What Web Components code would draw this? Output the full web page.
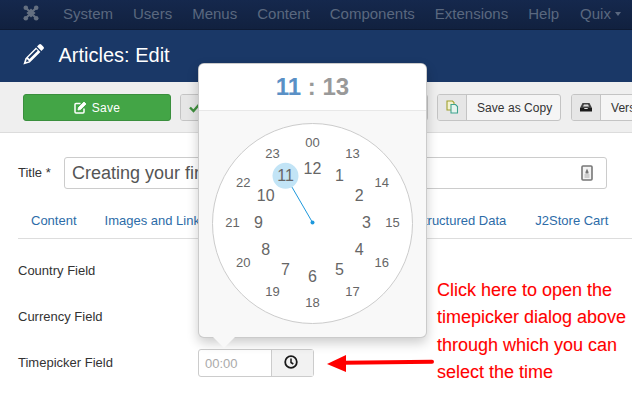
<!DOCTYPE html>
<html>
<head>
<meta charset="utf-8">
<title>Articles: Edit</title>
<style>
  html, body { margin: 0; padding: 0; }
  body {
    width: 632px; height: 402px; overflow: hidden; position: relative;
    background: #fff; color: #333;
    font-family: "Liberation Sans", Arial, sans-serif; font-size: 13px;
  }
</style>
</head>
<body>
<jm-navbar>
  <span>System</span><span>Users</span><span>Menus</span><span>Content</span><span>Components</span><span>Extensions</span><span>Help</span><span class="last">Quix</span>
</jm-navbar>
<jm-title>Articles: Edit</jm-title>
<jm-toolbar>
  <jm-save>Save</jm-save>
  <jm-tool width="248" icon="check"></jm-tool>
  <jm-tool width="124" icon="copy">Save as Copy</jm-tool>
  <jm-tool width="100" icon="inbox" class="versions">Versions</jm-tool>
</jm-toolbar>
<jm-titlefield></jm-titlefield>
<jm-tabs>
  <a>Content</a><a>Images and Links</a><a>Publishing</a><a class="wide">Options</a><a>Structured Data</a><a>J2Store Cart</a>
</jm-tabs>
<jm-field label="Country Field"></jm-field>
<jm-field label="Currency Field"></jm-field>
<jm-field label="Timepicker Field"><jm-timeinput></jm-timeinput></jm-field>
<clock-popover hour="11" minute="13"></clock-popover>
<jm-callout>Click here to open the<br>timepicker dialog above<br>through which you can<br>select the time</jm-callout>

<script>
// small helper so every element gets an open shadow root with its markup
class Base extends HTMLElement {
  render(html) {
    if (!this.shadowRoot) this.attachShadow({ mode: 'open' });
    this.shadowRoot.innerHTML = html;
  }
}

class JmNavbar extends Base {
  connectedCallback() {
    this.render(`
      <style>
        :host {
          display: flex; align-items: center; height: 29px; box-sizing: content-box;
          background: linear-gradient(#15284d, #11213f);
          border-bottom: 1px solid #0d1a33;
          overflow: hidden;
        }
        svg { width: 16px; height: 16px; margin: -3px 0 0 23px; flex: none; }
        nav { display: flex; margin: -2px 0 0 24px; font-size: 15px; color: #5a687f; white-space: nowrap; }
        ::slotted(span) { margin-right: 20px; }
        ::slotted(.last) { margin-left: 1px; }
        i { width: 0; height: 0; border: 3px solid transparent; border-top: 4px solid #5a687f; margin: 2px 0 0 -16px; flex: none; }
      </style>
      <svg viewBox="0 0 16 16" fill="none" stroke="#646f80" stroke-width="2.200">
        <path d="M3.500 3.500 12.500 12.500M12.500 3.500 3.500 12.500M5 8l3-3 3 3-3 3z"/>
        <g fill="#646f80" stroke="none"><circle cx="2.800" cy="2.800" r="2.300"/><circle cx="13.200" cy="2.800" r="2.300"/><circle cx="2.800" cy="13.200" r="2.300"/><circle cx="13.200" cy="13.200" r="2.300"/></g>
      </svg>
      <nav><slot></slot></nav><i></i>`);
  }
}

class JmTitle extends Base {
  connectedCallback() {
    this.render(`
      <style>
        :host {
          display: flex; align-items: center; height: 52px; padding-left: 23px;
          background: #1a3867; color: #fff; font-size: 20px;
        }
        svg { width: 21px; height: 21px; margin: -3px 14.500px 0 0; }
        span { margin-top: -2px; }
      </style>
      <svg viewBox="0 0 21 21" fill="#fff">
        <path d="M16 .6a1.6 1.6 0 0 1 2.2 0l2.2 2.2a1.6 1.6 0 0 1 0 2.2l-2 2-4.4-4.4z"/>
        <path d="M13 3.6 17.400 8 6.800 18.600.4 20.600 2.400 14.200z M3.800 14.900 3 17.900l.1.100 3-.8z M5 13.600l1.400 1.400 8.300-8.300-1.400-1.400z" fill-rule="evenodd"/>
      </svg>
      <span><slot></slot></span>`);
  }
}

class JmToolbar extends Base {
  connectedCallback() {
    this.render(`
      <style>
        :host {
          display: flex; gap: 9px; height: 27px; padding: 12px 0 11px 23px;
          background: #efefef; border-bottom: 1px solid #dcdcdc; overflow: hidden;
        }
        ::slotted(.versions) { margin-left: 1px; }
      </style>
      <slot></slot>`);
  }
}

class JmSave extends Base {
  connectedCallback() {
    this.render(`
      <style>
        :host {
          display: flex; align-items: center; justify-content: center; gap: 5px;
          box-sizing: border-box; width: 148px; height: 27px; flex: none;
          background: #43a546; border: 1px solid #3a8f3d; border-radius: 3px;
          color: #fff; font-size: 12px; letter-spacing: .3px;
        }
        svg { width: 13px; height: 13px; }
      </style>
      <svg viewBox="0 0 13 13" fill="none" stroke="#fff" stroke-width="1.500">
        <path d="M10 7.500V11a1 1 0 0 1-1 1H2a1 1 0 0 1-1-1V3.500a1 1 0 0 1 1-1h4.500"/>
        <path d="M4.500 6.500 4 9l2.500-.5L12 3 10 1z" fill="#fff" stroke-width=".8"/>
      </svg>
      <slot></slot>`);
  }
}

const toolIcons = {
  check: '<path d="M2 7.500 5.500 11 12 3.500" fill="none" stroke="#3f8f3e" stroke-width="2.400"/>',
  copy: '<path d="M2 1h5.500l1.500 1.500V10H2z" fill="#f4f2cf" stroke="#9fa02f" stroke-width="1.100"/><path d="M6 4.500h4.500l2 2V13H6z" fill="#e6f4ee" stroke="#3fa38f" stroke-width="1.100"/>',
  inbox: '<path d="M3.500 3h7l2.500 5H1z" fill="#444"/><path d="M5 4.500h4l1 2H4z" fill="#ddd"/><path d="M1 8h4l.6 1h2.800l.6-1h4v3.500H1z" fill="#1c1c1c"/>'
};

class JmTool extends Base {
  connectedCallback() {
    const w = this.getAttribute('width');
    this.render(`
      <style>
        :host {
          display: flex; box-sizing: border-box; width: ${w}px; height: 27px; flex: none;
          background: #f5f5f5; border: 1px solid #c4c4c4; border-radius: 3px;
          color: #333; font-size: 12px; letter-spacing: .05px; white-space: nowrap; overflow: hidden;
        }
        b { display: flex; align-items: center; justify-content: center; flex: none; width: 28px; height: 100%; background: #e6e6e6; border-right: 1px solid #c4c4c4; }
        span { align-self: center; padding-left: 10px; }
        svg { width: 14px; height: 14px; margin-top: -1px; }
      </style>
      <b><svg viewBox="0 0 14 14">${toolIcons[this.getAttribute('icon')]}</svg></b>
      <span><slot></slot></span>`);
  }
}

class JmTitlefield extends Base {
  connectedCallback() {
    this.render(`
      <style>
        :host { display: flex; align-items: center; height: 32px; padding: 24px 25px 0 18px; }
        label { width: 46px; flex: none; font-size: 13px; color: #333; margin-top: -2px; }
        div {
          flex: 1; display: flex; align-items: center; justify-content: space-between;
          box-sizing: border-box; height: 32px; padding: 0 13px 0 7px;
          border: 1px solid #ccc; border-radius: 3px;
          color: #555; font-size: 18px; white-space: nowrap;
        }
        svg { width: 12px; height: 16px; }
      </style>
      <label>Title *</label>
      <div>Creating your first article
        <svg viewBox="0 0 12 16"><rect x="1" y="1" width="10" height="14" rx="1" fill="#f3f3f3" stroke="#777" stroke-width="1.600"/><path d="M6 3.500l1.500 3.500v1.500h-3V7z" fill="#777"/><path d="M3.500 10h5M3.500 12h5" stroke="#aaa"/></svg>
      </div>`);
  }
}

class JmTabs extends Base {
  connectedCallback() {
    this.render(`
      <style>
        :host {
          display: flex; height: 37px; margin: 12px 0 0 18px; padding-left: 0;
          border-bottom: 1px solid #ddd; white-space: nowrap; overflow: hidden;
        }
        ::slotted(a) { padding: 12px 14px 0 13px; margin-right: 1px; color: #2d6ca8; font-size: 13px; }
        ::slotted(.wide) { padding-right: 34px; }
        ::slotted(a:last-child) { padding-left: 14px; }
      </style>
      <slot></slot>`);
  }
}

class JmField extends Base {
  connectedCallback() {
    this.render(`
      <style>
        :host { display: flex; align-items: center; height: 46px; padding-left: 18px; }
        :host(:first-of-type) { margin-top: 8px; }
        label { width: 180px; flex: none; font-size: 13px; color: #333; }
      </style>
      <label>${this.getAttribute('label')}</label><slot></slot>`);
  }
}

class JmTimeinput extends Base {
  connectedCallback() {
    this.render(`
      <style>
        :host { display: flex; height: 28px; width: 116px; margin-top: 1px; box-sizing: border-box; border: 1px solid #ccc; border-radius: 3px; }
        span { width: 66px; padding-left: 6px; line-height: 27px; color: #aaa; font-size: 13px; border-right: 1px solid #ccc; }
        b { flex: 1; display: flex; align-items: center; justify-content: center; background: #f2f2f2; }
        svg { width: 14px; height: 14px; margin: -2px 3px 0 0; }
      </style>
      <span>00:00</span>
      <b><svg viewBox="0 0 14 14" fill="none" stroke="#1a1a1a"><circle cx="7" cy="7" r="5.800" stroke-width="1.800"/><path d="M7 3.500V7.500l2.300 1.500" stroke-width="1.500"/></svg></b>`);
  }
}

class ClockPopover extends Base {
  connectedCallback() {
    const h = this.getAttribute('hour'), m = this.getAttribute('minute');
    const cx = 113.5, cy = 111;
    const place = (r, deg) => {
      const a = deg * Math.PI / 180;
      return { x: cx + r * Math.sin(a), y: cy - r * Math.cos(a) };
    };
    let labels = '';
    for (let i = 0; i < 12; i++) {
      const outer = place(80, i * 30), inner = place(54, i * 30);
      const o = String(i === 0 ? '00' : i + 12), n = String(i === 0 ? 12 : i);
      labels += `<span class="out" style="left:${outer.x}px;top:${outer.y}px">${o}</span>`;
      labels += `<span class="in" style="left:${inner.x}px;top:${inner.y}px">${n}</span>`;
    }
    const sel = place(54, 330);
    this.render(`
      <style>
        :host {
          position: absolute; left: 198px; top: 63px; width: 229px; height: 275px;
          box-sizing: border-box; background: #f8f8f8;
          border: 1px solid #ccc; border-color: rgba(0,0,0,.18); border-radius: 6px;
          box-shadow: 0 5px 12px rgba(0,0,0,.2);
          display: flex; flex-direction: column;
        }
        header {
          height: 47px; box-sizing: border-box; background: #fff; border-bottom: 1px solid #e8e8e8;
          border-radius: 5px 5px 0 0; text-align: center; font-size: 24px; font-weight: bold;
          line-height: 46px; color: #999; 
        }
        header em { font-style: normal; color: #5a90c6; }
        main { position: relative; flex: 1; }
        .dial {
          position: absolute; left: 13px; top: 12px; width: 201px; height: 201px; box-sizing: border-box;
          background: #fff; border: 1px solid #ccc; border-radius: 50%;
        }
        span { position: absolute; transform: translate(-50%, -50%); color: #666; line-height: 1; }
        .out { font-size: 13px; }
        .in { font-size: 16px; margin-top: 1px; }
        svg { position: absolute; left: 0; top: 0; width: 229px; height: 227px; }
        .tip {
          position: absolute; left: 14px; bottom: -11px; width: 0; height: 0;
          border-left: 11px solid transparent; border-right: 11px solid transparent;
          border-top: 11px solid #f8f8f8;
        }
      </style>
      <header><em>${h}</em> : ${m}</header>
      <main>
        <div class="dial"></div>
        <svg viewBox="0 0 229 227">
          <circle cx="${sel.x}" cy="${sel.y + .6}" r="13" fill="#c2e4f6"/>
          <line x1="${cx}" y1="${cy + .5}" x2="${sel.x + 6.500}" y2="${sel.y + 11.900}" stroke="#1d98dc" stroke-width="1"/>
          <circle cx="${cx}" cy="${cy + .5}" r="2" fill="#1d98dc"/>
        </svg>
        ${labels}
      </main>
      <div class="tip"></div>`);
  }
}

class JmCallout extends Base {
  connectedCallback() {
    this.render(`
      <style>
        :host {
          position: absolute; left: 437px; top: 277px;
          color: #f00; font-size: 18px; line-height: 27.300px; white-space: nowrap;
          text-shadow: 0 0 1px rgba(255,0,0,.15);
        }
        svg { position: absolute; left: -111px; top: 71px; width: 110px; height: 26px; }
      </style>
      <slot></slot>
      <svg viewBox="0 0 110 26">
        <path d="M18 14.700 106 13.700" stroke="#f00" stroke-width="4" stroke-linecap="round" fill="none"/>
        <path d="M1 16 20 7V24z" fill="#f00"/>
      </svg>`);
  }
}

customElements.define('jm-navbar', JmNavbar);
customElements.define('jm-title', JmTitle);
customElements.define('jm-toolbar', JmToolbar);
customElements.define('jm-save', JmSave);
customElements.define('jm-tool', JmTool);
customElements.define('jm-titlefield', JmTitlefield);
customElements.define('jm-tabs', JmTabs);
customElements.define('jm-field', JmField);
customElements.define('jm-timeinput', JmTimeinput);
customElements.define('clock-popover', ClockPopover);
customElements.define('jm-callout', JmCallout);
</script>
</body>
</html>
